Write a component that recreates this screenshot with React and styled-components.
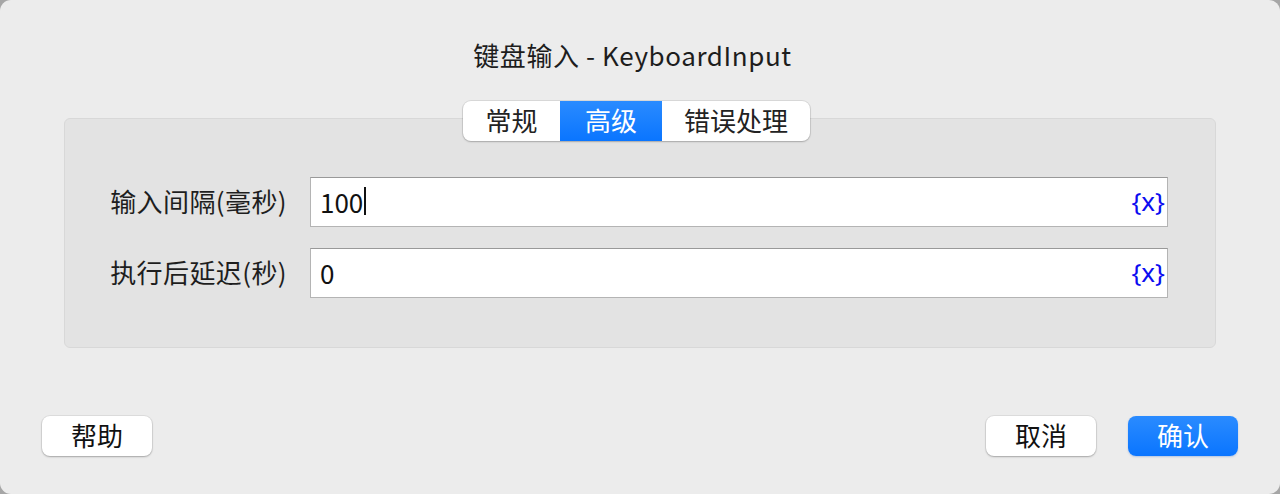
import styled, { createGlobalStyle } from "styled-components";

const GlobalStyle = createGlobalStyle`
  html, body {
    margin: 0;
    padding: 0;
    background: #a6a6a6;
  }
  * {
    box-sizing: border-box;
  }
`;

const Window = styled.div`
  width: 1280px;
  height: 494px;
  background: #ececec;
  border-radius: 11px;
  display: flex;
  flex-direction: column;
  font-family: "Noto Sans CJK SC", "Noto Sans", sans-serif;
  color: #1d1d1d;
  overflow: hidden;
`;

const Title = styled.div`
  margin-top: 35px;
  padding-right: 15px;
  height: 40px;
  line-height: 40px;
  text-align: center;
  font-size: 26px;
  letter-spacing: 0.6px;
`;

const TabBar = styled.div`
  position: relative;
  z-index: 1;
  align-self: center;
  margin: 26px 7px 0 0;
  height: 40px;
  display: flex;
  background: #fff;
  border-radius: 8px;
  box-shadow: 0 0 0 1px rgba(0, 0, 0, 0.08), 0 1px 2px rgba(0, 0, 0, 0.2);
  overflow: hidden;
`;

const Tab = styled.div`
  width: ${(p) => p.width}px;
  display: flex;
  align-items: center;
  justify-content: center;
  padding-bottom: 3px;
  font-size: 26px;
  color: ${(p) => (p.active ? "#fff" : "#222")};
  background: ${(p) =>
    p.active ? "linear-gradient(#2a8bff, #0a75ff)" : "transparent"};
`;

const Group = styled.div`
  margin: -23px 64px 0;
  height: 230px;
  background: #e3e3e3;
  border: 1px solid #d8d8d8;
  border-radius: 6px;
  padding: 58px 47px 0 0;
  display: grid;
  grid-template-columns: 222px 1fr;
  grid-auto-rows: 50px;
  column-gap: 23px;
  row-gap: 21px;
  align-content: start;
`;

const Label = styled.div`
  display: flex;
  align-items: center;
  justify-content: flex-end;
  padding-bottom: 3px;
  font-size: 26px;
  letter-spacing: 0.4px;
  color: #1e1e1e;
`;

const Field = styled.div`
  display: flex;
  align-items: center;
  background: #fff;
  border: 1px solid #b4b4b4;
  border-top-color: #999;
  padding: 0 0 2px 9px;
`;

const Value = styled.span`
  flex: 1;
  display: flex;
  align-items: center;
  font-size: 26px;
  color: #111;
`;

const Caret = styled.span`
  display: inline-block;
  width: 2px;
  height: 28px;
  background: #111;
  margin-left: 1px;
`;

const VarButton = styled.span`
  font-family: "Noto Sans", "Liberation Sans", sans-serif;
  font-size: 26px;
  color: #0c0cf0;
  padding-right: 2px;
`;

const Footer = styled.div`
  margin-top: 68px;
  padding: 0 42px;
  display: flex;
  align-items: center;
  gap: 32px;
`;

const Spacer = styled.div`
  flex: 1;
`;

const Button = styled.div`
  width: 110px;
  height: 40px;
  border-radius: 8px;
  display: flex;
  align-items: center;
  justify-content: center;
  padding-bottom: 3px;
  font-size: 26px;
  color: ${(p) => (p.primary ? "#fff" : "#111")};
  background: ${(p) =>
    p.primary ? "linear-gradient(#2a8bff, #0a75ff)" : "#fff"};
  box-shadow: ${(p) =>
    p.primary
      ? "0 1px 2px rgba(0, 80, 200, 0.25)"
      : "0 0 0 1px rgba(0, 0, 0, 0.06), 0 1px 2px rgba(0, 0, 0, 0.25)"};
`;

const fields = [
  { label: "输入间隔(毫秒)", value: "100", focused: true },
  { label: "执行后延迟(秒)", value: "0" },
];

export default function App() {
  return (
    <>
      <GlobalStyle />
      <Window>
        <Title>键盘输入 - KeyboardInput</Title>
        <TabBar>
          <Tab width={97}>常规</Tab>
          <Tab width={102} active>
            高级
          </Tab>
          <Tab width={148}>错误处理</Tab>
        </TabBar>
        <Group>
          {fields.map((f) => (
            <>
              <Label key={f.label}>{f.label}</Label>
              <Field key={f.label + "-field"}>
                <Value>
                  {f.value}
                  {f.focused && <Caret />}
                </Value>
                <VarButton>{"{x}"}</VarButton>
              </Field>
            </>
          ))}
        </Group>
        <Footer>
          <Button>帮助</Button>
          <Spacer />
          <Button>取消</Button>
          <Button primary>确认</Button>
        </Footer>
      </Window>
    </>
  );
}
